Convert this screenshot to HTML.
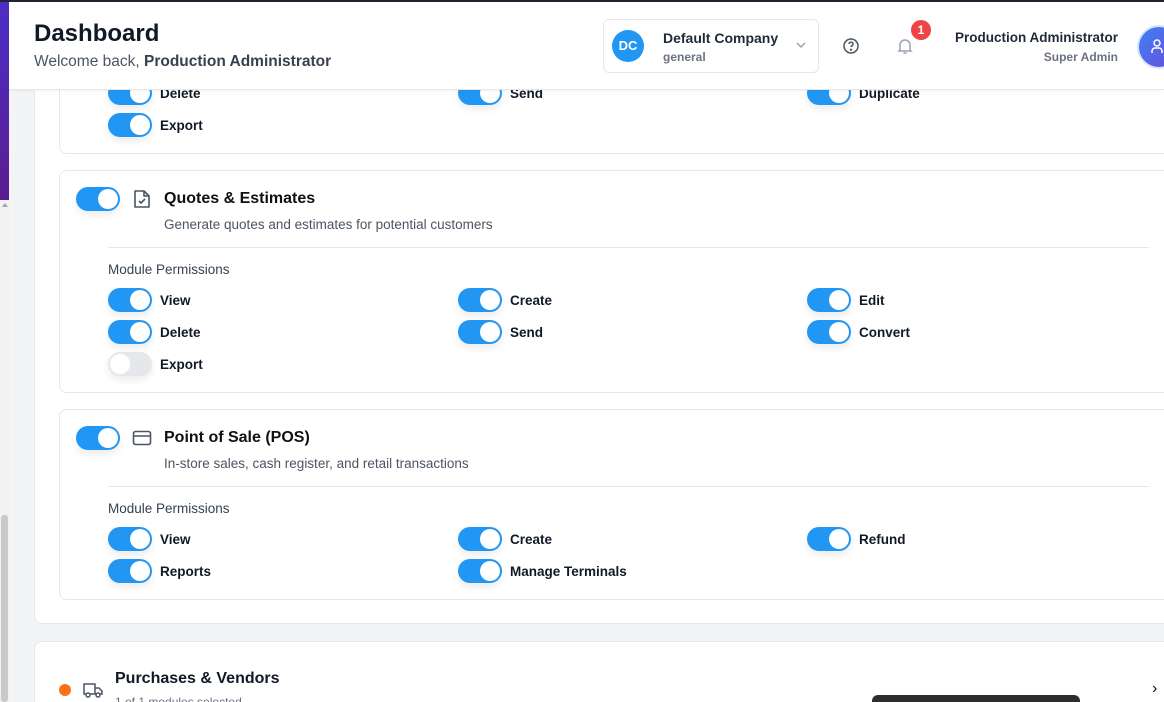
<!DOCTYPE html>
<html style="overflow:hidden;width:1164px;height:702px"><head><meta charset="utf-8"><style>
*{box-sizing:border-box;margin:0;padding:0}
body{width:1164px;height:702px;overflow:hidden;background:#f3f4f6;font-family:"Liberation Sans",sans-serif;color:#111827;position:relative}
.abs{position:absolute}
.tg{position:absolute;width:44px;height:24px;border-radius:12px;background:#2196f3;box-shadow:0 4px 8px rgba(0,0,0,.08)}
.tg::after{content:"";position:absolute;top:2px;left:22px;width:20px;height:20px;border-radius:50%;background:#fff}
.tg.off{background:#e5e7eb}.tg.off::after{left:2px}
.lb{position:absolute;font-size:13.5px;font-weight:bold;color:#111827;line-height:16px}
.card{position:absolute;left:59px;width:1120px;background:#fff;border:1px solid #e5e7eb;border-radius:8px}
.ttl{position:absolute;left:164px;font-size:16px;font-weight:bold;color:#111}
.desc{position:absolute;left:164px;font-size:13.5px;color:#4b5563}
.mp{position:absolute;left:108px;font-size:13.5px;color:#374151;font-weight:500}
.hr{position:absolute;left:108px;width:1041px;height:1px;background:#e5e7eb}
</style></head><body>
<div class="abs" style="left:0;top:0;width:9px;height:200px;background:linear-gradient(#4c2fc9,#5a1d8f)"></div>
<div class="abs" style="left:0;top:200px;width:9px;height:502px;background:#f1f1f1"></div>
<div class="abs" style="left:1px;top:515px;width:7px;height:187px;background:#c9c9cc;border-radius:3px"></div>
<div class="abs" style="left:2px;top:203px;width:0;height:0;border-left:3px solid transparent;border-right:3px solid transparent;border-bottom:4px solid #a3a3a3"></div>

<div class="abs" style="left:34px;top:60px;width:1140px;height:564px;background:#fff;border:1px solid #e5e7eb;border-radius:8px"></div>

<div class="card" style="top:40px;height:114px"></div>
<div class="tg" style="left:108px;top:81px"></div><div class="lb" style="left:160px;top:86px">Delete</div>
<div class="tg" style="left:458px;top:81px"></div><div class="lb" style="left:510px;top:86px">Send</div>
<div class="tg" style="left:807px;top:81px"></div><div class="lb" style="left:859px;top:86px">Duplicate</div>
<div class="tg" style="left:108px;top:113px"></div><div class="lb" style="left:160px;top:118px">Export</div>

<div class="card" style="top:170px;height:223px"></div>
<div class="tg" style="left:76px;top:187px"></div>
<svg class="abs" style="left:133px;top:189px" width="18" height="20" viewBox="0 0 18 20" fill="none" stroke="#4b5563" stroke-width="1.6" stroke-linejoin="round"><path d="M2 2h9l5 5v11H2z"/><path d="M11 2v5h5"/><path d="M6 12l2 2 4-4"/></svg>
<div class="ttl" style="top:190px">Quotes &amp; Estimates</div>
<div class="desc" style="top:217px">Generate quotes and estimates for potential customers</div>
<div class="hr" style="top:247px"></div>
<div class="mp" style="top:262px">Module Permissions</div>
<div class="tg" style="left:108px;top:288px"></div><div class="lb" style="left:160px;top:293px">View</div>
<div class="tg" style="left:458px;top:288px"></div><div class="lb" style="left:510px;top:293px">Create</div>
<div class="tg" style="left:807px;top:288px"></div><div class="lb" style="left:859px;top:293px">Edit</div>
<div class="tg" style="left:108px;top:320px"></div><div class="lb" style="left:160px;top:325px">Delete</div>
<div class="tg" style="left:458px;top:320px"></div><div class="lb" style="left:510px;top:325px">Send</div>
<div class="tg" style="left:807px;top:320px"></div><div class="lb" style="left:859px;top:325px">Convert</div>
<div class="tg off" style="left:108px;top:352px"></div><div class="lb" style="left:160px;top:357px">Export</div>

<div class="card" style="top:409px;height:191px"></div>
<div class="tg" style="left:76px;top:426px"></div>
<svg class="abs" style="left:132px;top:430px" width="20" height="16" viewBox="0 0 20 16" fill="none" stroke="#4b5563" stroke-width="1.6"><rect x="1.5" y="1.5" width="17" height="13" rx="2"/><path d="M1.5 6h17"/></svg>
<div class="ttl" style="top:429px">Point of Sale (POS)</div>
<div class="desc" style="top:456px">In-store sales, cash register, and retail transactions</div>
<div class="hr" style="top:486px"></div>
<div class="mp" style="top:501px">Module Permissions</div>
<div class="tg" style="left:108px;top:527px"></div><div class="lb" style="left:160px;top:532px">View</div>
<div class="tg" style="left:458px;top:527px"></div><div class="lb" style="left:510px;top:532px">Create</div>
<div class="tg" style="left:807px;top:527px"></div><div class="lb" style="left:859px;top:532px">Refund</div>
<div class="tg" style="left:108px;top:559px"></div><div class="lb" style="left:160px;top:564px">Reports</div>
<div class="tg" style="left:458px;top:559px"></div><div class="lb" style="left:510px;top:564px">Manage Terminals</div>

<div class="abs" style="left:34px;top:641px;width:1140px;height:70px;background:#fff;border:1px solid #e5e7eb;border-bottom:none;border-radius:8px 8px 0 0"></div>
<div class="abs" style="left:59px;top:684px;width:12px;height:12px;border-radius:50%;background:#f97316"></div>
<svg class="abs" style="left:83px;top:681px" width="20" height="18" viewBox="0 0 20 18" fill="none" stroke="#4b5563" stroke-width="1.5"><path d="M1 3h11v10H1z"/><path d="M12 7h4l3 3v3h-7"/><circle cx="5" cy="14" r="2" fill="#fff"/><circle cx="15" cy="14" r="2" fill="#fff"/></svg>
<div class="abs" style="left:115px;top:670px;font-size:16px;font-weight:bold">Purchases &amp; Vendors</div>
<div class="abs" style="left:115px;top:695px;font-size:12px;color:#6b7280">1 of 1 modules selected</div>
<div class="abs" style="left:1152px;top:680px;font-size:16px;color:#111">›</div>
<div class="abs" style="left:872px;top:695px;width:208px;height:7px;background:#2d2d2d;border-radius:6px 6px 0 0"></div>

<div class="abs" style="left:0;top:0;width:1164px;height:2px;background:#1f2430"></div>
<div class="abs" style="left:9px;top:2px;width:1155px;height:88px;background:#fff;border-bottom:1px solid #e5e7eb;box-shadow:0 1px 3px rgba(0,0,0,.05)"></div>
<div class="abs" style="left:34px;top:20px;font-size:24px;font-weight:bold;color:#111827">Dashboard</div>
<div class="abs" style="left:34px;top:53px;font-size:15.5px;color:#4b5563">Welcome back, <b style="color:#374151">Production Administrator</b></div>
<div class="abs" style="left:603px;top:19px;width:216px;height:54px;border:1px solid #e5e7eb;border-radius:6px;background:#fff"></div>
<div class="abs" style="left:612px;top:30px;width:32px;height:32px;border-radius:50%;background:#2196f3;color:#fff;font-size:13px;font-weight:bold;text-align:center;line-height:32px">DC</div>
<div class="abs" style="left:663px;top:30px;font-size:14px;font-weight:bold;color:#1f2937">Default Company</div>
<div class="abs" style="left:663px;top:50px;font-size:12px;color:#6b7280;font-weight:bold">general</div>
<svg class="abs" style="left:795px;top:41px" width="12" height="8" viewBox="0 0 12 8" fill="none" stroke="#9ca3af" stroke-width="1.5"><path d="M2 2l4 4 4-4"/></svg>
<svg class="abs" style="left:842px;top:37px" width="18" height="18" viewBox="0 0 18 18" fill="none" stroke="#4b5563" stroke-width="1.5"><circle cx="9" cy="9" r="7"/><path d="M7 7a2 2 0 1 1 2.5 2c-.4.2-.5.6-.5 1"/><circle cx="9" cy="12.8" r=".4" fill="#4b5563"/></svg>
<svg class="abs" style="left:896px;top:37px" width="18" height="18" viewBox="0 0 18 18" fill="none" stroke="#9ca3af" stroke-width="1.5"><path d="M4 13V8a5 5 0 0 1 10 0v5l1 1H3z"/><path d="M7.5 16h3"/></svg>
<div class="abs" style="left:911px;top:20px;width:20px;height:20px;border-radius:50%;background:#ef4444;color:#fff;font-size:12px;font-weight:bold;text-align:center;line-height:20px">1</div>
<div class="abs" style="left:900px;top:30px;width:218px;text-align:right;font-size:13.5px;font-weight:bold;color:#1f2937">Production Administrator</div>
<div class="abs" style="left:900px;top:50px;width:218px;text-align:right;font-size:12px;font-weight:bold;color:#6b7280">Super Admin</div>
<div class="abs" style="left:1137px;top:25px;width:44px;height:44px;border-radius:50%;background:linear-gradient(135deg,#3b82f6,#6d4bdc);border:2px solid #dbe4ff"></div>
<svg class="abs" style="left:1150px;top:38px" width="14" height="16" viewBox="0 0 14 16" fill="none" stroke="#fff" stroke-width="1.5"><circle cx="7" cy="5" r="3"/><path d="M2 15v-2a3 3 0 0 1 3-3h4a3 3 0 0 1 3 3v2"/></svg>
</body></html>
